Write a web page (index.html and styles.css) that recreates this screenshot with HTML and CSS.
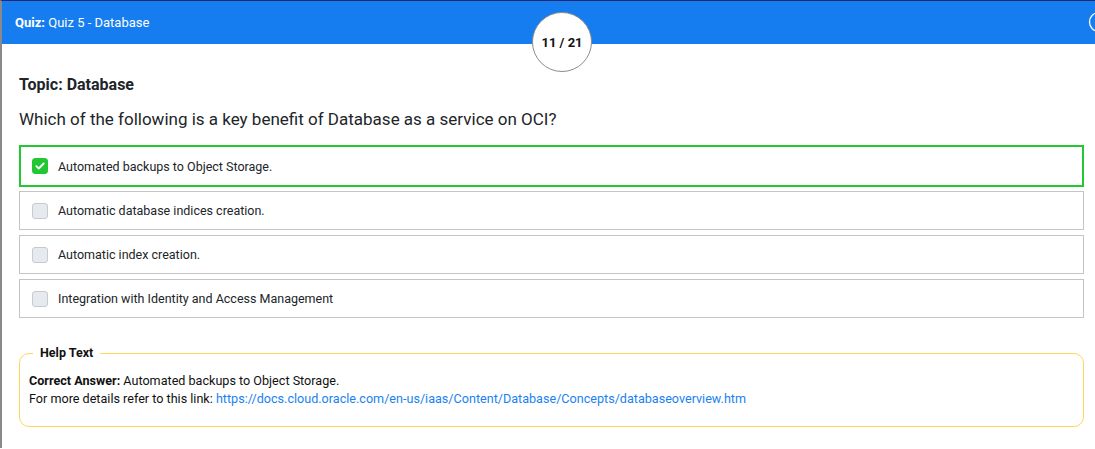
FILE: index.html
```html
<!DOCTYPE html>
<html>
<head>
<meta charset="utf-8">
<link rel="stylesheet" href="styles.css">
</head>
<body>
<div class="frame">
  <header class="bar">
    <div class="bar-title"><b>Quiz:</b> Quiz 5 - Database</div>
    <div class="counter">11 / 21</div>
    <svg class="bar-icon" width="22" height="22" viewBox="0 0 22 22"><circle cx="11" cy="11" r="9.5" fill="none" stroke="#fff" stroke-width="1.3"/></svg>
  </header>
  <main class="content">
    <h2 class="topic">Topic: Database</h2>
    <p class="question">Which of the following is a key benefit of Database as a service on OCI?</p>
    <div class="options">
      <div class="option selected"><span class="box checked"><svg width="10" height="8" viewBox="0 0 10 8"><path d="M1.3 4.2 L3.8 6.5 L8.7 1.5" fill="none" stroke="#fff" stroke-width="1.8" stroke-linecap="round" stroke-linejoin="round"/></svg></span>Automated backups to Object Storage.</div>
      <div class="option"><span class="box"></span>Automatic database indices creation.</div>
      <div class="option"><span class="box"></span>Automatic index creation.</div>
      <div class="option"><span class="box"></span>Integration with Identity and Access Management</div>
    </div>
    <fieldset class="help">
      <legend>Help Text</legend>
      <div><b>Correct Answer:</b> Automated backups to Object Storage.</div>
      <div>For more details refer to this link: <a href="#">https://docs.cloud.oracle.com/en-us/iaas/Content/Database/Concepts/databaseoverview.htm</a></div>
    </fieldset>
  </main>
</div>
</body>
</html>
```
FILE: styles.css
```css
html, body {
  margin: 0;
  padding: 0;
  background: #fff;
  font-family: Roboto, "Liberation Sans", sans-serif;
  color: #212529;
}
.frame {
  border-left: 2px solid #8a8a8a;
  border-top: 1px solid #24276b;
  min-height: 448px;
  box-sizing: border-box;
  overflow: hidden;
}
.bar {
  position: relative;
  height: 43px;
  background: #167df0;
  color: #fff;
  display: flex;
  align-items: center;
  justify-content: space-between;
  padding-left: 13px;
  font-size: 13px;
}
.bar-title { padding-bottom: 1px; }
.bar-icon { margin-right: -15px; margin-bottom: 1px; }
.counter {
  position: absolute;
  left: 530px;
  top: 11px;
  width: 60px;
  height: 60px;
  box-sizing: border-box;
  border: 1px solid #8c8c8c;
  border-radius: 50%;
  background: #fff;
  color: #111;
  font-weight: 700;
  font-size: 13px;
  display: flex;
  align-items: center;
  justify-content: center;
  z-index: 2;
}
.content {
  padding: 31px 11px 0 17px;
}
.topic {
  margin: 0;
  font-size: 16px;
  font-weight: 700;
  line-height: 19px;
  color: #212529;
}
.question {
  margin: 15px 0 15px;
  font-size: 17px;
  line-height: 21px;
  color: #212529;
}
.options {
  display: flex;
  flex-direction: column;
  gap: 5px;
}
.option {
  display: flex;
  align-items: center;
  gap: 10px;
  height: 39px;
  box-sizing: border-box;
  border: 1px solid #c4c4c4;
  padding-left: 12px;
  font-size: 12.5px;
  color: #212529;
}
.option.selected {
  height: 42px;
  border: 2px solid #22c832;
  padding-left: 11px;
  margin-bottom: -1px;
}
.box {
  width: 16px;
  height: 16px;
  box-sizing: border-box;
  border-radius: 3px;
  border: 1px solid #c6cbd1;
  background: #e6e9ed;
  display: flex;
  align-items: center;
  justify-content: center;
  flex: none;
}
.box.checked {
  background: #22c832;
  border-color: #22c832;
}
.help {
  margin: 26px 0 0;
  border: 1px solid #ffd65c;
  border-radius: 10px;
  padding: 10px 10px 18px 9px;
  font-size: 12.6px;
  line-height: 18px;
  color: #111;
}
.help legend {
  font-weight: 700;
  font-size: 12.5px;
  padding: 0 7px;
  margin-left: 4px;
}
.help a {
  color: #1a82f0;
  text-decoration: none;
}
```
